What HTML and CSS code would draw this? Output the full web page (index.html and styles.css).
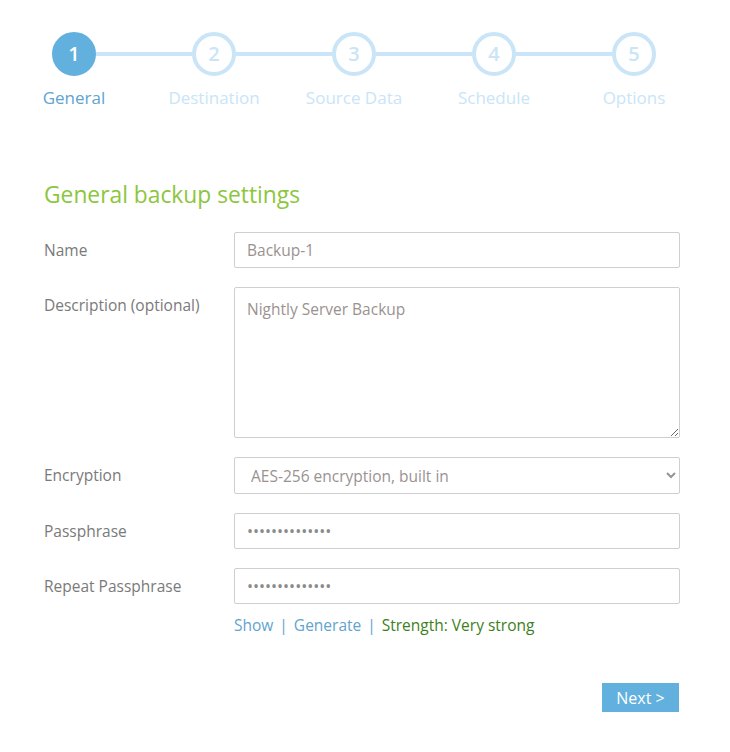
FILE: index.html
```html
<!DOCTYPE html>
<html>
<head>
<meta charset="utf-8">
<link rel="stylesheet" href="styles.css">
</head>
<body>
<div class="wizard">
  <div class="track">
    <div class="circle active">1</div>
    <div class="line"></div>
    <div class="circle">2</div>
    <div class="line"></div>
    <div class="circle">3</div>
    <div class="line"></div>
    <div class="circle">4</div>
    <div class="line"></div>
    <div class="circle">5</div>
  </div>
  <div class="labels">
    <span class="label active">General</span>
    <span class="label">Destination</span>
    <span class="label">Source Data</span>
    <span class="label">Schedule</span>
    <span class="label">Options</span>
  </div>

  <h2 class="title">General backup settings</h2>

  <div class="form">
    <div class="row">
      <label class="flabel">Name</label>
      <input class="field" type="text" value="Backup-1">
    </div>
    <div class="row">
      <label class="flabel">Description (optional)</label>
      <textarea class="field area">Nightly Server Backup</textarea>
    </div>
    <div class="row">
      <label class="flabel">Encryption</label>
      <select class="field sel"><option>AES-256 encryption, built in</option></select>
    </div>
    <div class="row">
      <label class="flabel">Passphrase</label>
      <input class="field pw" type="password" value="abcdefghijklmn">
    </div>
    <div class="row">
      <label class="flabel">Repeat Passphrase</label>
      <input class="field pw" type="password" value="abcdefghijklmn">
    </div>
    <div class="links">
      <a class="lnk">Show</a><span class="sep">|</span><a class="lnk">Generate</a><span class="sep">|</span><span class="strength">Strength: Very strong</span>
    </div>
  </div>

  <div class="actions">
    <button class="next">Next &gt;</button>
  </div>
</div>
</body>
</html>
```

FILE: styles.css
```css
html, body {
  margin: 0;
  padding: 0;
  background: #ffffff;
}
body {
  font-family: "Open Sans", "Noto Sans", sans-serif;
  color: #7a7a7a;
}
.wizard {
  width: 730px;
  padding-top: 32px;
}
.track {
  display: flex;
  align-items: center;
  margin-left: 52px;
}
.circle {
  width: 44px;
  height: 44px;
  box-sizing: border-box;
  border: 4px solid #c9e5f7;
  border-radius: 50%;
  color: #c9e5f7;
  font-size: 20px;
  font-weight: 600;
  display: flex;
  align-items: center;
  justify-content: center;
  line-height: 1;
}
.circle.active {
  background: #62b0de;
  border-color: #62b0de;
  color: #ffffff;
}
.line {
  width: 96px;
  height: 4px;
  background: #c9e5f7;
}
.labels {
  display: flex;
  margin-left: 4px;
  margin-top: 10px;
}
.label {
  width: 140px;
  text-align: center;
  font-size: 17px;
  line-height: 24px;
  color: #c9e5f7;
}
.label.active {
  color: #62a3cf;
}
.title {
  margin: 70px 0 0 44px;
  font-size: 22.8px;
  font-weight: 400;
  line-height: 30px;
  color: #8cc63e;
}
.form {
  margin: 22px 0 0 44px;
  width: 636px;
  display: flex;
  flex-direction: column;
  gap: 19px;
}
.row {
  display: flex;
  align-items: flex-start;
}
.flabel {
  width: 190px;
  flex: none;
  font-size: 15.5px;
  line-height: 36px;
  color: #7a7a7a;
}
.field {
  width: 446px;
  height: 36px;
  box-sizing: border-box;
  border: 1px solid #cfcfcf;
  border-radius: 2px;
  padding: 0 12px;
  font-family: inherit;
  font-size: 15.5px;
  color: #9a9290;
  background: #ffffff;
  margin: 0;
  outline: none;
}
.area {
  height: 151px;
  padding: 10px 12px;
  line-height: 22px;
  resize: vertical;
}
.sel {
  height: 37px;
  padding: 0 12px;
}
.pw {
  font-size: 16px;
  letter-spacing: 0;
  color: #8a8a8a;
}
.links {
  margin-left: 190px;
  margin-top: -10px;
  font-size: 15.5px;
  line-height: 24px;
}
.lnk {
  color: #62a3cf;
}
.sep {
  color: #62a3cf;
  margin: 0 6px;
}
.strength {
  color: #3d7f1c;
}
.actions {
  display: flex;
  justify-content: flex-end;
  width: 679px;
  margin-top: 46px;
}
.next {
  width: 77px;
  height: 29px;
  border: none;
  background: #62b0de;
  color: #ffffff;
  font-family: inherit;
  font-size: 16px;
  padding: 0;
  border-radius: 0;
}
```
